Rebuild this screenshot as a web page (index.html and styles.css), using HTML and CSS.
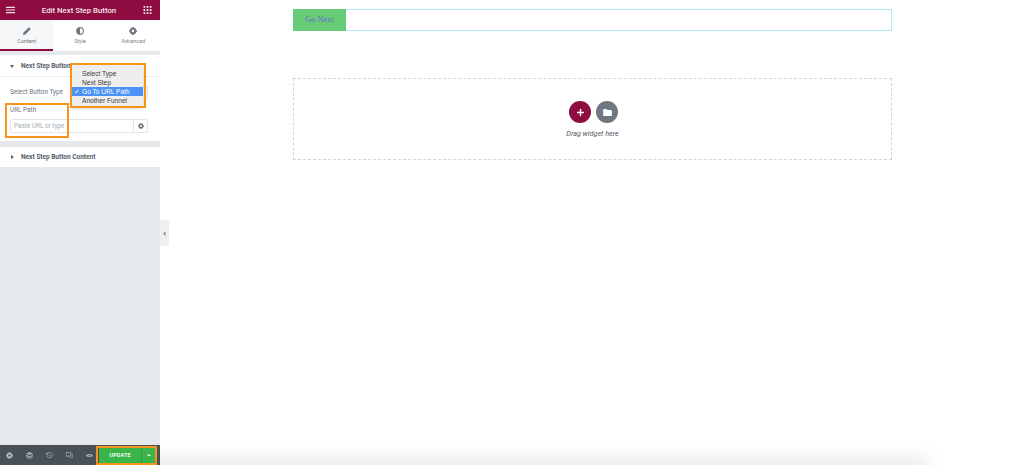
FILE: index.html
```html
<!DOCTYPE html>
<html lang="en">

<head>
    <meta charset="UTF-8">
    <meta name="viewport" content="width=device-width, initial-scale=1.0">
    <title>Edit Next Step Button</title>
    <link rel="stylesheet" href="styles.css">
</head>

<body>
    <aside class="panel">
        <header class="panel-header">
            <svg class="header-icon" viewBox="0 0 10 8"><path d="M0 .5h10v1.200H0zM0 3.400h10v1.200H0zM0 6.300h10v1.200H0z" fill="#f3dfe7"/></svg>
            <span class="panel-title">Edit Next Step Button</span>
            <svg class="header-icon" viewBox="0 0 9 9"><path d="M0 0h2v2H0zM3.500 0h2v2h-2zM7 0h2v2H7zM0 3.500h2v2H0zM3.500 3.500h2v2h-2zM7 3.500h2v2H7zM0 7h2v2H0zM3.500 7h2v2h-2zM7 7h2v2H7z" fill="#f3dfe7"/></svg>
        </header>

        <nav class="tabs">
            <div class="tab active">
                <svg class="tab-icon" viewBox="0 0 10 10"><path d="M0 10l.6-3L6.800.8a1 1 0 0 1 1.400 0l1 1a1 1 0 0 1 0 1.400L3 9.400z" fill="#6d7882"/></svg>
                <span>Content</span>
            </div>
            <div class="tab">
                <svg class="tab-icon" viewBox="0 0 10 10"><circle cx="5" cy="5" r="4.200" fill="none" stroke="#6d7882" stroke-width="1.300"/><path d="M5 .8a4.200 4.200 0 0 0 0 8.400z" fill="#6d7882"/></svg>
                <span>Style</span>
            </div>
            <div class="tab">
                <svg class="tab-icon" viewBox="0 0 10 10"><path d="M4 0h2l.3 1.500 1-.5 1.700 1.700-.6 1 1.600.3v2l-1.600.3.600 1L7.300 9l-1-.5L6 10H4l-.3-1.500-1 .5L1 7.300l.6-1L0 6V4l1.600-.3-.6-1L2.700 1l1 .5z" fill="#6d7882"/><circle cx="5" cy="5" r="1.600" fill="#fff"/></svg>
                <span>Advanced</span>
            </div>
        </nav>

        <section class="section">
            <div class="section-head">
                <span class="caret-down"></span>
                <span>Next Step Button</span>
            </div>
            <div class="section-body">
                <div class="field-row">
                    <span class="field-label">Select Button Type</span>
                    <div class="select-box"></div>
                </div>
                <div class="field-label url-label">URL Path</div>
                <div class="url-input">
                    <span class="url-text">Paste URL or type</span>
                    <span class="url-gear">
                        <svg viewBox="0 0 10 10"><path d="M4 0h2l.3 1.500 1-.5 1.700 1.700-.6 1 1.600.3v2l-1.600.3.600 1L7.300 9l-1-.5L6 10H4l-.3-1.500-1 .5L1 7.300l.6-1L0 6V4l1.600-.3-.6-1L2.700 1l1 .5z" fill="#6d7882"/><circle cx="5" cy="5" r="1.600" fill="#fff"/></svg>
                    </span>
                </div>
            </div>
        </section>

        <section class="section second">
            <div class="section-head closed">
                <span class="caret-right"></span>
                <span>Next Step Button Content</span>
            </div>
        </section>

        <div class="panel-fill"></div>

        <footer class="panel-footer">
            <div class="footer-icons">
                <svg viewBox="0 0 10 10"><path d="M4 0h2l.3 1.500 1-.5 1.700 1.700-.6 1 1.600.3v2l-1.600.3.600 1L7.300 9l-1-.5L6 10H4l-.3-1.500-1 .5L1 7.300l.6-1L0 6V4l1.600-.3-.6-1L2.700 1l1 .5z" fill="#aab1b7"/><circle cx="5" cy="5" r="1.600" fill="#495157"/></svg>
                <svg viewBox="0 0 10 10"><path d="M5 0l5 2.200L5 4.400 0 2.200zM0 4l5 2.200L10 4v1.800L5 8 0 5.800zM0 6.800L5 9l5-2.200V8L5 10 0 8z" fill="#aab1b7"/></svg>
                <svg viewBox="0 0 10 10"><path d="M1.500 2.200A4 4 0 1 1 1 5" fill="none" stroke="#aab1b7" stroke-width="1"/><path d="M.5 .8v2.600h2.600zM5 2.800v2.500l1.600 1" fill="#aab1b7" stroke="#aab1b7" stroke-width=".5"/></svg>
                <svg viewBox="0 0 10 10"><path d="M.5 .8h6.500v5H3L1.500 7.200V5.800h-1z" fill="none" stroke="#aab1b7"/><path d="M8 3h1.500v4.500h-1v1.300L7 7.500H4.500" fill="none" stroke="#aab1b7" stroke-width=".8"/></svg>
                <svg viewBox="0 0 12 10"><path d="M0 5c2-3.600 10-3.600 12 0-2 3.600-10 3.600-12 0z" fill="#aab1b7"/><circle cx="6" cy="5" r="1.500" fill="#495157"/></svg>
            </div>
            <div class="update-btn">
                <span class="update-label">UPDATE</span>
                <span class="update-arrow"></span>
            </div>
        </footer>

        <!-- native select popup and the orange marks drawn on the screenshot -->
        <ul class="select-menu">
            <li>Select Type</li>
            <li>Next Step</li>
            <li class="picked">Go To URL Path</li>
            <li>Another Funnel</li>
        </ul>
        <div class="mark mark-menu"></div>
        <div class="mark mark-url"></div>
        <div class="mark mark-update"></div>
    </aside>

    <div class="panel-toggle"><span class="toggle-arrow"></span></div>

    <main class="canvas">
        <div class="button-row">
            <a class="next-btn">Go Next</a>
        </div>
        <div class="drop-zone">
            <div class="drop-buttons">
                <span class="round-btn add">
                    <svg viewBox="0 0 8 8"><path d="M3.200 0h1.600v3.200H8v1.600H4.800V8H3.200V4.800H0V3.200h3.200z" fill="#fff"/></svg>
                </span>
                <span class="round-btn folder">
                    <svg viewBox="0 0 10 8"><path d="M0 1a1 1 0 0 1 1-1h2.800l1 1.200H9a1 1 0 0 1 1 1V7a1 1 0 0 1-1 1H1a1 1 0 0 1-1-1z" fill="#fff"/></svg>
                </span>
            </div>
            <div class="drop-text">Drag widget here</div>
        </div>
    </main>

    <div class="bottom-shade"></div>
</body>

</html>
```

FILE: styles.css
```css
* {
    box-sizing: border-box;
}

html,
body {
    height: 100%;
}

body {
    margin: 0;
    display: flex;
    height: 465px;
    overflow: hidden;
    position: relative;
    background: #fff;
    font-family: "Roboto", "Liberation Sans", sans-serif;
    color: #6d7882;
}

.panel {
    position: relative;
    width: 160px;
    flex-shrink: 0;
    display: flex;
    flex-direction: column;
    background: #e6e9ec;
    z-index: 2;
}

.panel-header {
    height: 20px;
    padding: 0 8px 0 6px;
    display: flex;
    align-items: center;
    justify-content: space-between;
    background: #8e0c40;
}

.header-icon {
    width: 9px;
    height: 8px;
}

.panel-title {
    font-size: 7.800px;
    font-weight: 500;
    color: #f5e3ea;
}

.tabs {
    display: flex;
    height: 31px;
    background: #fff;
}

.tab {
    flex: 1;
    display: flex;
    flex-direction: column;
    align-items: center;
    padding-top: 7px;
    gap: 3px;
    font-size: 5.400px;
    color: #7d878f;
}

.tab.active {
    background: #f6f7f8;
    border-bottom: 2px solid #8e0c40;
    color: #6d7882;
}

.tab-icon {
    width: 8px;
    height: 8px;
}

.section {
    margin-top: 4px;
    background: #fff;
}

.section.second {
    margin-top: 6px;
}

.section-head {
    height: 22px;
    padding: 1px 0 0 10px;
    display: flex;
    align-items: center;
    gap: 7px;
    border-bottom: 1px solid #eceef0;
    font-size: 6.500px;
    font-weight: 700;
    color: #556068;
}

.section-head.closed {
    height: 20px;
    padding: 0 0 1px 11px;
    border-bottom: 0;
    gap: 7px;
}

.caret-down {
    border-left: 2.500px solid transparent;
    border-right: 2.500px solid transparent;
    border-top: 3px solid #556068;
}

.caret-right {
    border-top: 2.500px solid transparent;
    border-bottom: 2.500px solid transparent;
    border-left: 3px solid #556068;
}

.section-body {
    height: 64px;
    padding: 8px 12px 0 10px;
}

.field-row {
    display: flex;
    align-items: center;
    justify-content: space-between;
    height: 14px;
}

.field-label {
    font-size: 6.400px;
    color: #6d7882;
}

.select-box {
    width: 20px;
    height: 13px;
    border: 1px solid #dde0e3;
}

.url-label {
    margin-top: 7px;
    line-height: 8px;
}

.url-input {
    display: flex;
    margin-top: 5px;
    height: 14px;
    border: 1px solid #e3e5e8;
    border-radius: 2px;
}

.url-text {
    flex: 1;
    padding-left: 3px;
    font-size: 6.400px;
    line-height: 12px;
    color: #a4afb7;
}

.url-gear {
    width: 14px;
    display: flex;
    align-items: center;
    justify-content: center;
    border-left: 1px solid #e3e5e8;
}

.url-gear svg {
    width: 6px;
    height: 6px;
}

.panel-fill {
    flex: 1;
}

.panel-footer {
    height: 20px;
    display: flex;
    align-items: center;
    justify-content: space-between;
    padding-right: 5px;
    background: #495157;
}

.footer-icons {
    display: flex;
    align-items: center;
    gap: 13px;
    padding-left: 5.500px;
}

.footer-icons svg {
    width: 7px;
    height: 7px;
}

.update-btn {
    width: 56px;
    height: 16px;
    display: flex;
    border-radius: 1px;
    background: #39b54a;
    color: #e8f7ea;
    font-size: 5.500px;
    font-weight: 700;
}

.update-label {
    flex: 1;
    text-align: center;
    line-height: 16px;
    letter-spacing: 0.1px;
}

.update-arrow {
    width: 14px;
    border-left: 1px solid #2f9a3e;
    position: relative;
}

.update-arrow::after {
    content: "";
    position: absolute;
    left: 5px;
    top: 7px;
    border-left: 2px solid transparent;
    border-right: 2px solid transparent;
    border-bottom: 2px solid #e8f7ea;
}

.select-menu {
    position: absolute;
    left: 72px;
    top: 65px;
    width: 71px;
    margin: 0;
    padding: 3.500px 0 1px;
    list-style: none;
    background: #eeeeee;
    box-shadow: 0 1px 3px rgba(0, 0, 0, 0.25);
    font-family: "Liberation Sans", sans-serif;
    font-size: 6.600px;
    line-height: 9.300px;
    color: #3a3a3a;
}

.select-menu li {
    padding-left: 10px;
    position: relative;
}

.select-menu .picked {
    background: #4a92f5;
    color: #fff;
}

.select-menu .picked::before {
    content: "\2713";
    position: absolute;
    left: 2px;
    font-size: 6.500px;
}

.mark {
    position: absolute;
    border: 2px solid #f7941d;
}

.mark-menu {
    left: 70px;
    top: 63px;
    width: 76px;
    height: 45px;
}

.mark-url {
    left: 5px;
    top: 103px;
    width: 64px;
    height: 35px;
}

.mark-update {
    left: 96px;
    top: 446px;
    width: 61px;
    height: 19px;
}

.panel-toggle {
    position: absolute;
    left: 160px;
    top: 220px;
    width: 9px;
    height: 26px;
    display: flex;
    align-items: center;
    justify-content: center;
    background: #eeeff1;
    z-index: 1;
}

.toggle-arrow {
    width: 3px;
    height: 3px;
    margin-left: 1px;
    border-left: 1px solid #6d7882;
    border-bottom: 1px solid #6d7882;
    transform: rotate(45deg);
}

.canvas {
    flex: 1;
    display: flex;
    flex-direction: column;
    align-items: center;
    padding: 9px 0 0 1px;
}

.button-row {
    width: 599px;
    height: 22px;
    border: 1px solid #b5ecf3;
    display: flex;
}

.next-btn {
    width: 53px;
    margin: -1px 0 -1px -1px;
    background: #67cc76;
    border-radius: 1px;
    text-align: center;
    font-family: "Liberation Serif", serif;
    font-size: 8.300px;
    line-height: 22px;
    color: #6a64c8;
}

.drop-zone {
    width: 599px;
    height: 82px;
    margin-top: 47px;
    padding-top: 22px;
    border: 1px dashed #d4d7da;
    display: flex;
    flex-direction: column;
    align-items: center;
}

.drop-buttons {
    display: flex;
    gap: 5px;
    margin-left: 2px;
}

.round-btn {
    width: 22px;
    height: 22px;
    border-radius: 50%;
    display: flex;
    align-items: center;
    justify-content: center;
}

.round-btn.add {
    background: #8e0c40;
}

.round-btn.folder {
    background: #6d7882;
}

.round-btn.add svg {
    width: 7px;
    height: 7px;
}

.round-btn.folder svg {
    width: 9px;
    height: 7px;
}

.drop-text {
    margin-top: 6px;
    font-size: 7.200px;
    font-style: italic;
    color: #54595f;
}

.bottom-shade {
    position: absolute;
    left: 140px;
    bottom: -10px;
    width: 780px;
    height: 10px;
    box-shadow: 0 0 20px 8px rgba(0, 0, 0, 0.09);
    pointer-events: none;
}
```
